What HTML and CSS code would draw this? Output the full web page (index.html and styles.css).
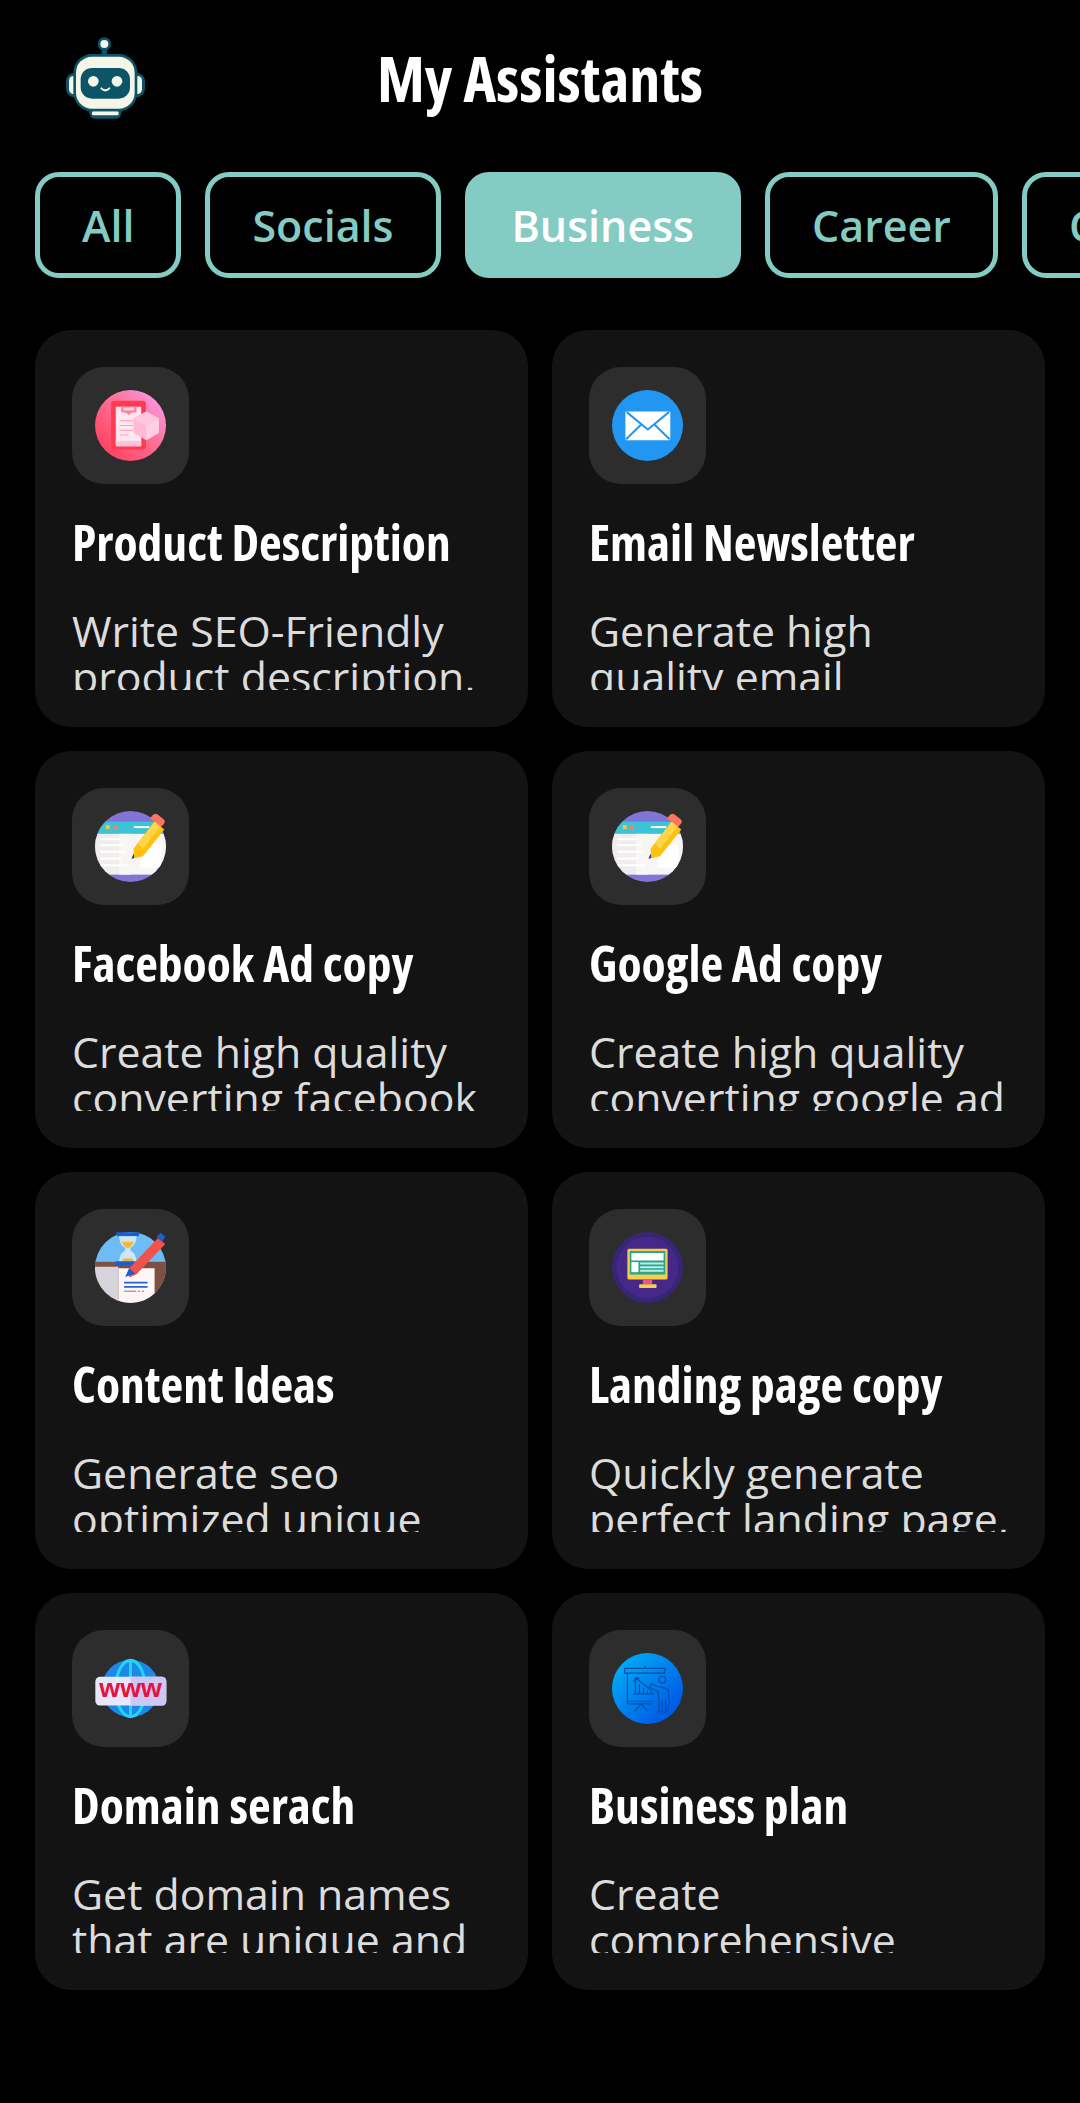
FILE: index.html
```html
<!DOCTYPE html>
<html lang="en">
<head>
    <meta charset="UTF-8">
    <meta name="viewport" content="width=device-width, initial-scale=1.0">
    <title>My Assistants</title>
    <link rel="stylesheet" href="styles.css">
</head>
<body>
    <div class="main">
        <div class="header">
            <svg class="robot" viewBox="0 0 300 330">
                <rect x="125" y="85" width="16" height="25" fill="#0c5568"/>
                <circle cx="133" cy="72" r="20" fill="#0c5568"/>
                <circle cx="133" cy="72" r="12" fill="#f5f6e8"/>
                <rect x="18" y="158" width="60" height="74" rx="26" fill="#0c5568"/>
                <rect x="195" y="158" width="60" height="74" rx="26" fill="#0c5568"/>
                <rect x="27" y="168" width="30" height="54" rx="14" fill="#f5f6e8"/>
                <rect x="216" y="168" width="30" height="54" rx="14" fill="#f5f6e8"/>
                <path d="M82 262h108l-8 24q-3 10-14 10h-64q-11 0-14-10z" fill="#0c5568"/>
                <rect x="96" y="274" width="80" height="12" rx="4" fill="#f5f6e8"/>
                <rect x="40" y="102" width="192" height="172" rx="56" fill="#0c5568"/>
                <rect x="48" y="110" width="176" height="156" rx="48" fill="#f5f6e8"/>
                <rect x="62" y="144" width="148" height="92" rx="34" fill="#0c5568"/>
                <circle cx="100" cy="184" r="16" fill="#f5f6e8"/>
                <circle cx="171" cy="184" r="16" fill="#f5f6e8"/>
                <path d="M124 205q12 12 24 0" fill="none" stroke="#f5f6e8" stroke-width="6" stroke-linecap="round"/>
            </svg>
            <div class="page-title">My Assistants</div>
        </div>

        <div class="chips">
            <div class="chip">All</div>
            <div class="chip">Socials</div>
            <div class="chip active">Business</div>
            <div class="chip">Career</div>
            <div class="chip">Coding</div>
        </div>

        <div class="cards">
            <div class="card">
                <div class="icon-box">
                    <svg class="icon" viewBox="0 0 212 212">
                        <defs><linearGradient id="pink" x1="0" y1="1" x2="1" y2="0"><stop offset="0.1" stop-color="#ff3f5e"/><stop offset="0.55" stop-color="#ff6f96"/><stop offset="1" stop-color="#f7a4f6"/></linearGradient></defs>
                        <circle cx="106" cy="106" r="106" fill="url(#pink)"/>
                        <rect x="48" y="32" width="104" height="146" rx="10" fill="#ff3b52"/>
                        <rect x="62" y="50" width="76" height="118" rx="3" fill="#ffe6f0"/>
                        <rect x="62" y="152" width="76" height="16" fill="#ffc4da"/>
                        <path d="M78 50h46v16l-16 3-7 6-7-6-16-3z" fill="#ff7f9d"/>
                        <rect x="85" y="52" width="32" height="9" fill="#ffd9e6"/>
                        <path d="M74 92h40M74 106h40M74 120h40M74 134h26" stroke="#ff9fb8" stroke-width="3"/>
                        <path d="M153 64l38 20v44l-38 22-38-22V84z" fill="#ffb8d6"/>
                        <path d="M153 108l38-24v44l-38 22z" fill="#ffd0e4"/>
                        <path d="M115 84l38 24 38-24-38-20z" fill="#ffc6dd"/>
                    </svg>
                </div>
                <div class="card-title">Product Description</div>
                <div class="card-desc">Write SEO-Friendly product description, that sells your items</div>
            </div>
            <div class="card">
                <div class="icon-box">
                    <svg class="icon" viewBox="0 0 212 212">
                        <circle cx="106" cy="106" r="106" fill="#2196f3"/>
                        <rect x="40" y="64" width="134" height="86" rx="4" fill="#fff"/>
                        <path d="M44 66l63 52 63-52M42 147l46-45M172 147l-46-45" fill="none" stroke="#2196f3" stroke-width="6"/>
                    </svg>
                </div>
                <div class="card-title">Email Newsletter</div>
                <div class="card-desc">Generate high quality email newsletters</div>
            </div>
            <div class="card">
                <div class="icon-box">
                    <svg class="icon" viewBox="0 0 212 212">
                        <use href="#page-icon"/>
                    </svg>
                </div>
                <div class="card-title">Facebook Ad copy</div>
                <div class="card-desc">Create high quality converting facebook ads</div>
            </div>
            <div class="card">
                <div class="icon-box">
                    <svg class="icon" viewBox="0 0 212 212">
                        <defs>
                            <clipPath id="page-clip"><circle cx="106" cy="106" r="106"/></clipPath>
                            <g id="page-icon">
                                <g clip-path="url(#page-clip)">
                                    <rect width="212" height="212" fill="#8275d8"/>
                                    <rect y="32" width="212" height="36" fill="#3cc3d8"/>
                                    <rect y="68" width="106" height="122" fill="#f1eded"/>
                                    <rect x="72" y="68" width="140" height="122" fill="#f8f6f5"/>
                                    <rect x="136" y="100" width="62" height="70" fill="#fff"/>
                                    <rect x="32" y="42" width="12" height="12" fill="#f2c53a"/>
                                    <rect x="54" y="42" width="12" height="12" fill="#e8876a"/>
                                    <rect x="116" y="45" width="46" height="6" fill="#fff"/>
                                    <path d="M16 84h60M16 102h74M16 122h78M16 142h64M16 162h84" stroke="#fff" stroke-width="6"/>
                                </g>
                                <path d="M115 128l-6 15 16-6z" fill="#233a80"/>
                                <path d="M115 113l62-82 30 24-64 80-26 6z" fill="#ffc10e"/>
                                <path d="M128 97l62-80 17 14-64 82z" fill="#ffd64a"/>
                                <path d="M172 13q6-8 14-3l19 15q6 6 1 13l-8 9-34-25z" fill="#fb7660"/>
                            </g>
                        </defs>
                        <use href="#page-icon"/>
                    </svg>
                </div>
                <div class="card-title">Google Ad copy</div>
                <div class="card-desc">Create high quality converting google ad copies</div>
            </div>
            <div class="card">
                <div class="icon-box">
                    <svg class="icon" viewBox="0 0 212 212">
                        <defs><clipPath id="idea-clip"><circle cx="106" cy="106" r="106"/></clipPath></defs>
                        <g clip-path="url(#idea-clip)">
                            <rect width="212" height="212" fill="#6ebcf6"/>
                            <rect y="89" width="212" height="123" fill="#7c5042"/>
                            <path d="M0 104h70v108H0z" fill="#d6d4da"/>
                            <path d="M70 108h108v104H70z" fill="#fdf6f4"/>
                        </g>
                        <g transform="translate(0 9)">
                            <path d="M62 -8h72l-4 12H66z" fill="#1a5fd0"/>
                            <path d="M72 4h52q0 26-18 34v8q18 10 18 36H72q0-26 18-36v-8Q72 30 72 4z" fill="#cfe6f2"/>
                            <path d="M80 20h36q-4 12-18 20-14-8-18-20z" fill="#f2b92f"/>
                            <path d="M86 70h24l8 10H78z" fill="#e6b34c"/>
                            <path d="M62 78h72l4 12H58z" fill="#1a5fd0"/>
                        </g>
                        <path d="M87 151h70M87 164h70" stroke="#2565c9" stroke-width="5"/>
                        <path d="M87 177h36M128 177h6M140 177h6" stroke="#a3a3ab" stroke-width="5"/>
                        <path d="M102 108l86-90 22 18-86 90-22 10z" fill="#f0524d"/>
                        <path d="M184 14l12-12 14 12-10 14z" fill="#1c5fd0"/>
                        <path d="M102 108l18 16-30 10z" fill="#1a5fd0"/>
                    </svg>
                </div>
                <div class="card-title">Content Ideas</div>
                <div class="card-desc">Generate seo optimized unique content ideas</div>
            </div>
            <div class="card">
                <div class="icon-box">
                    <svg class="icon" viewBox="0 0 212 212">
                        <circle cx="106" cy="106" r="106" fill="#372576"/>
                        <circle cx="106" cy="106" r="92" fill="#46288a"/>
                        <rect x="46" y="50" width="120" height="92" rx="5" fill="#f6cf45"/>
                        <rect x="53" y="57" width="106" height="70" fill="#27a590"/>
                        <rect x="58" y="63" width="96" height="22" fill="#fff"/>
                        <rect x="58" y="90" width="21" height="30" fill="#fff"/>
                        <path d="M84 94h70M84 105h70M84 116h70" stroke="#bdf0e3" stroke-width="6"/>
                        <rect x="92" y="142" width="28" height="14" fill="#e8558f"/>
                        <rect x="81" y="156" width="52" height="11" rx="2" fill="#f6cf45"/>
                    </svg>
                </div>
                <div class="card-title">Landing page copy</div>
                <div class="card-desc">Quickly generate perfect landing page, copies for you</div>
            </div>
            <div class="card">
                <div class="icon-box">
                    <svg class="icon" viewBox="0 0 212 212">
                        <circle cx="106" cy="106" r="86" fill="#1e88e8"/>
                        <ellipse cx="106" cy="106" rx="44" ry="84" fill="none" stroke="#20d6f2" stroke-width="9"/>
                        <path d="M106 20v172" stroke="#20d6f2" stroke-width="9"/>
                        <rect x="1" y="71" width="212" height="86" rx="14" fill="#e8e6fb"/>
                        <path d="M106 71h93q14 0 14 14v58q0 14-14 14h-93z" fill="#cbc9f3"/>
                        <text x="13" y="131" textLength="187" lengthAdjust="spacingAndGlyphs" class="www-text">www</text>
                    </svg>
                </div>
                <div class="card-title">Domain serach</div>
                <div class="card-desc">Get domain names that are unique and brandable</div>
            </div>
            <div class="card">
                <div class="icon-box">
                    <svg class="icon" viewBox="0 0 212 212">
                        <defs><linearGradient id="blue" x1="0" y1="0" x2="1" y2="1"><stop offset="0.1" stop-color="#00aef6"/><stop offset="0.9" stop-color="#0052e4"/></linearGradient></defs>
                        <circle cx="106" cy="106" r="106" fill="url(#blue)"/>
                        <g fill="none" stroke="#0a4fa8" stroke-width="3.5">
                            <path d="M98 38v8M38 46h120v14H38zM46 60v84h78M46 144v8h72M88 152l-22 22M88 152l18 22"/>
                            <path d="M70 76v44M82 94v26M94 104v16M106 112v8M118 112v8M64 122h62M70 74l48 38M70 74l-4 12M70 74l12 2"/>
                            <circle cx="150" cy="80" r="10"/>
                            <path d="M118 92l16 8 16 2 18 8 4 36-8 30h-24v-30l-2-30-26-14z"/>
                            <path d="M150 140v32M160 140v32"/>
                        </g>
                    </svg>
                </div>
                <div class="card-title">Business plan</div>
                <div class="card-desc">Create comprehensive business plans</div>
            </div>
        </div>
    </div>
</body>
</html>
```

FILE: styles.css
```css
body{
    margin: 0;
    background-color: #000;
    font-family: "Open Sans", "Noto Sans", sans-serif;
    color: #fff;
}
.main{
    height: 2103px;
    overflow: hidden;
}
.header{
    display: grid;
    grid-template-columns: 1fr auto 1fr;
    align-items: start;
    height: 150px;
    padding-top: 20px;
    box-sizing: border-box;
}
.robot{
    width: 100px;
    height: 110px;
    margin-left: 60px;
}
.page-title{
    margin-top: 18px;
    font-size: 62px;
    font-weight: 700;
    font-stretch: 75%;
    line-height: 80px;
}
.chips{
    display: flex;
    gap: 24px;
    margin-top: 22px;
    padding-left: 35px;
    overflow: hidden;
}
.chip{
    flex: none;
    height: 106px;
    padding: 0 42px;
    box-sizing: border-box;
    border: solid #84cbc3 5px;
    border-radius: 24px;
    color: #84cbc3;
    font-size: 43px;
    font-weight: 600;
    line-height: 98px;
}
.chip.active{
    background-color: #84cbc3;
    color: #fff;
}
.cards{
    display: grid;
    grid-template-columns: 493px 493px;
    grid-auto-rows: 397px;
    gap: 24px;
    margin-top: 52px;
    padding-left: 35px;
}
.card{
    padding: 37px 35px 37px 37px;
    box-sizing: border-box;
    border-radius: 36px;
    background-color: #131313;
}
.icon-box{
    display: flex;
    align-items: center;
    justify-content: center;
    width: 117px;
    height: 117px;
    border-radius: 32px;
    background-color: #2d2d2d;
}
.icon{
    width: 71px;
    height: 71px;
    overflow: visible;
}
.card-title{
    margin-top: 24px;
    font-size: 49.5px;
    font-weight: 700;
    font-stretch: 75%;
    line-height: 68px;
}
.card-desc{
    height: 82px;
    margin-top: 32px;
    overflow: hidden;
    color: #dcdcdc;
    font-size: 42.8px;
    font-weight: 400;
    line-height: 46px;
}
.www-text{
    fill: #e8103f;
    font-family: "Liberation Sans", sans-serif;
    font-size: 78px;
    font-weight: 700;
}
```
